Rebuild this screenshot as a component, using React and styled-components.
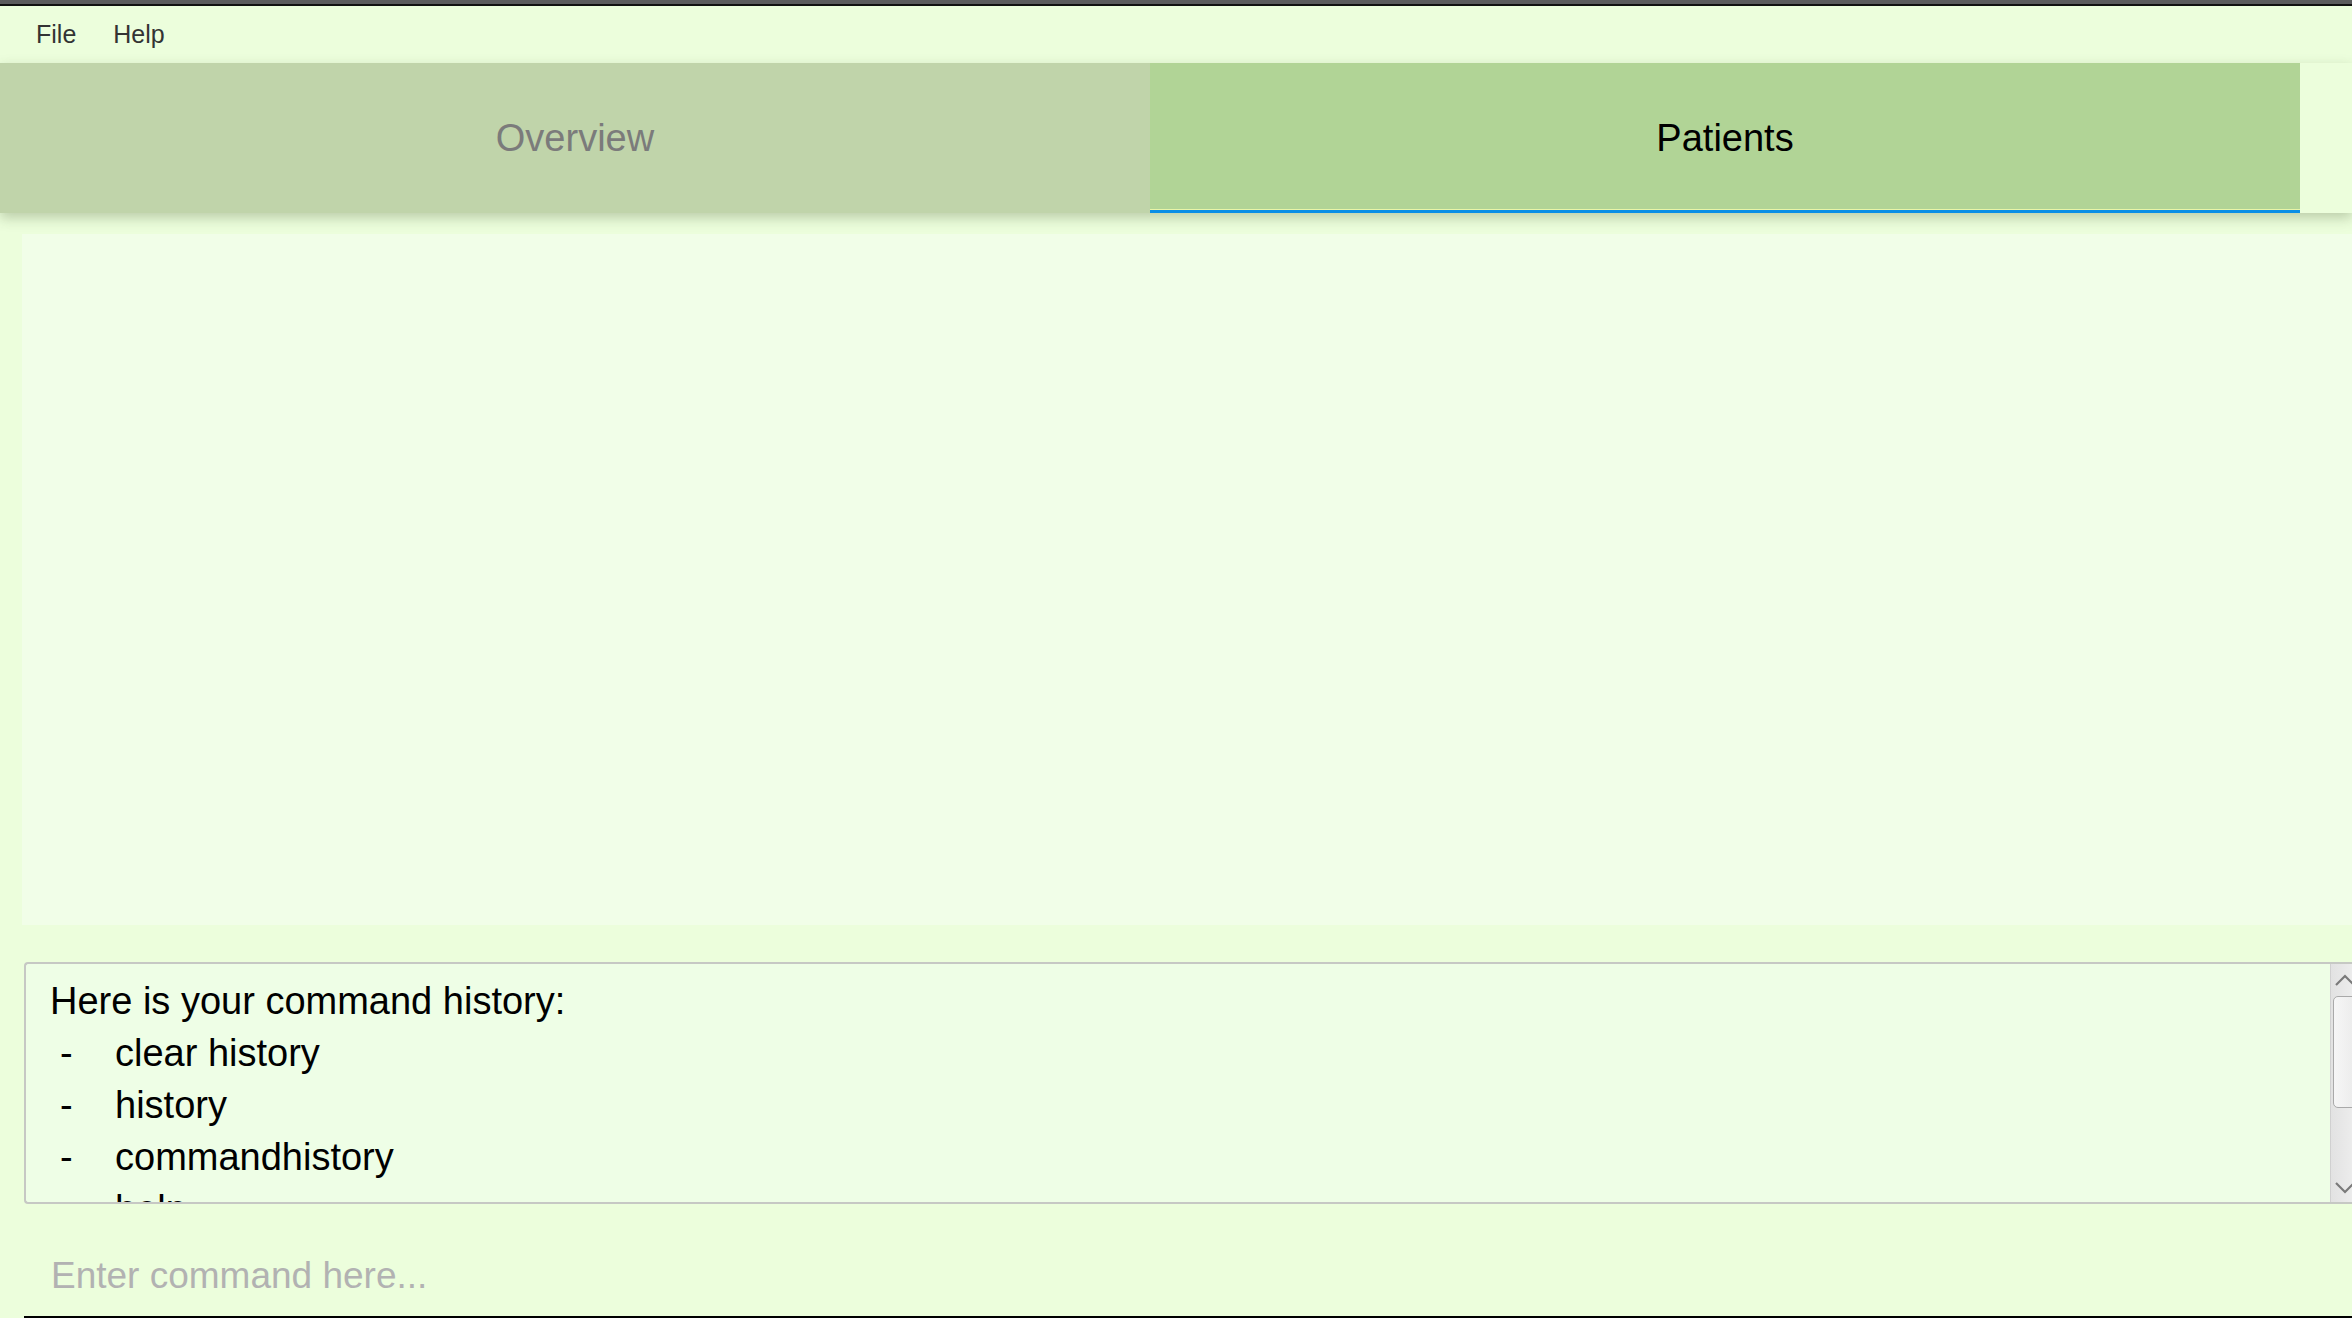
import React from "react"
import styled, { createGlobalStyle } from "styled-components"

const GlobalStyle = createGlobalStyle`
  html, body {
    margin: 0;
    padding: 0;
    background: #ecfedc;
    overflow: hidden;
  }
  * { box-sizing: border-box; }
`

const Window = styled.div`
  width: 2352px;
  height: 1318px;
  display: flex;
  flex-direction: column;
  background: #ecfedc;
  font-family: "Liberation Sans", Arial, sans-serif;
  overflow: hidden;
`

const TitleStrip = styled.div`
  height: 6px;
  flex: none;
  background: #5b5b5d;
  border-bottom: 2px solid #111;
`

const MenuBar = styled.div`
  height: 57px;
  flex: none;
  display: flex;
  align-items: center;
  gap: 37px;
  padding-left: 36px;
`

const MenuItem = styled.span`
  font-size: 25px;
  color: #333;
`

const TabHeader = styled.div`
  height: 150px;
  flex: none;
  display: flex;
  position: relative;
  z-index: 1;
  box-shadow: 0 5px 12px rgba(60, 80, 40, 0.28);
`

const Tab = styled.div`
  width: 1150px;
  display: flex;
  align-items: center;
  justify-content: center;
  font-size: 38px;
  background: ${p => (p.active ? "#b1d496" : "#c0d4aa")};
  color: ${p => (p.active ? "#000" : "#7b7b7b")};
  border-bottom: ${p => (p.active ? "3px solid #0a8ee6" : "none")};
  box-shadow: ${p => (p.active ? "inset 0 -1px 0 #e9f5a8" : "none")};
  padding-top: ${p => (p.active ? "3px" : "0")};
`

const Body = styled.div`
  padding: 21px 0 0 22px;
  flex: none;
`

const ListPanel = styled.div`
  height: 691px;
  background: #f1fee8;
`

const ResultBox = styled.div`
  margin: 37px 0 0 24px;
  height: 242px;
  flex: none;
  display: flex;
  border: 2px solid #c6c8c4;
  border-right: none;
  border-radius: 4px 0 0 4px;
  background: #eefee6;
  overflow: hidden;
`

const ResultText = styled.div`
  flex: 1;
  padding: 11px 0 0 24px;
  font-size: 38px;
  line-height: 52px;
  color: #000;
  overflow: hidden;
`

const HistoryRow = styled.div`
  display: flex;
`

const Dash = styled.span`
  width: 65px;
  padding-left: 10px;
  flex: none;
`

const ScrollBar = styled.div`
  width: 22px;
  flex: none;
  display: flex;
  flex-direction: column;
  align-items: flex-start;
  background: linear-gradient(to right, #e2e2e2, #ececec);
  border-left: 1px solid #d0d0d0;
  overflow: hidden;
`

const Arrow = styled.svg`
  margin: ${p => (p.down ? "auto 0 8px 4px" : "10px 0 0 4px")};
  flex: none;
`

const Thumb = styled.div`
  margin: 10px 0 0 2px;
  width: 28px;
  height: 112px;
  border: 1px solid #a9a9a9;
  border-radius: 5px;
  background: linear-gradient(to right, #f6f6f6, #e9e9e9);
`

const CommandBox = styled.div`
  margin-left: 24px;
  flex: 1;
  display: flex;
  align-items: flex-end;
  padding: 0 0 14px 27px;
  border-bottom: 2px solid #000;
`

const CommandInput = styled.input`
  width: 100%;
  border: none;
  outline: none;
  background: transparent;
  font-family: "Liberation Sans", Arial, sans-serif;
  font-size: 37px;
  line-height: 52px;
  padding: 0;
  color: #000;
  &::placeholder {
    color: #b2b2b2;
  }
`

const history = ["clear history", "history", "commandhistory", "help"]

export default function App() {
  return (
    <Window>
      <GlobalStyle />
      <TitleStrip />
      <MenuBar>
        <MenuItem>File</MenuItem>
        <MenuItem>Help</MenuItem>
      </MenuBar>
      <TabHeader>
        <Tab>Overview</Tab>
        <Tab active>Patients</Tab>
      </TabHeader>
      <Body>
        <ListPanel />
      </Body>
      <ResultBox>
        <ResultText>
          <div>Here is your command history:</div>
          {history.map(item => (
            <HistoryRow key={item}>
              <Dash>-</Dash>
              <span>{item}</span>
            </HistoryRow>
          ))}
        </ResultText>
        <ScrollBar>
          <Arrow width="18" height="12" viewBox="0 0 18 12">
            <path d="M1 11 L10 2 L19 11" fill="none" stroke="#7a7a7a" strokeWidth="2.2" />
          </Arrow>
          <Thumb />
          <Arrow down width="18" height="12" viewBox="0 0 18 12">
            <path d="M1 1 L10 10 L19 1" fill="none" stroke="#7a7a7a" strokeWidth="2.2" />
          </Arrow>
        </ScrollBar>
      </ResultBox>
      <CommandBox>
        <CommandInput placeholder="Enter command here..." />
      </CommandBox>
    </Window>
  )
}
